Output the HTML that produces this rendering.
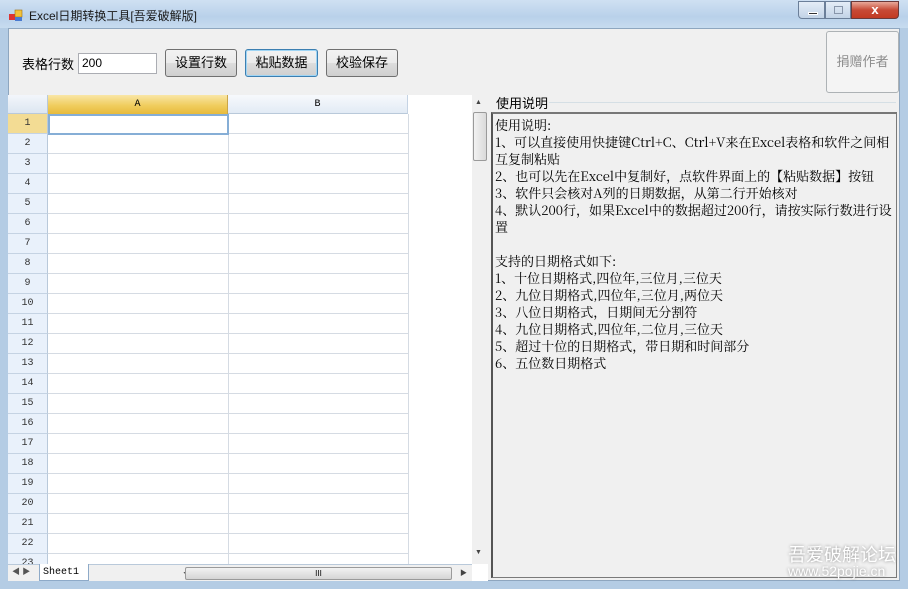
<!DOCTYPE html>
<html><head><meta charset="utf-8"><style>
*{box-sizing:border-box;margin:0;padding:0}
body{width:908px;height:589px;overflow:hidden;background:#b4cce4;font-family:"Liberation Sans","Microsoft YaHei","Noto Sans CJK SC",sans-serif;font-size:13px;color:#000;position:relative}
.abs{position:absolute}
.title{left:0;top:0;width:908px;height:28px;background:linear-gradient(#cfe0f2,#b9d1ea 60%,#c7dbef)}
.client{left:8px;top:28px;width:892px;height:553px;background:#f0f0f0;border:1px solid #8ea6bf}
.btn{background:linear-gradient(#f2f2f2,#ebebeb 50%,#dddddd 51%,#cfcfcf);border:1px solid #707070;border-radius:3px;text-align:center;line-height:26px;font-size:13px}
.grid{left:8px;top:95px;width:480px;height:486px;background:#fff}
.rh{position:absolute;left:0;width:40px;height:20px;background:#e9f1fb;border-bottom:1px solid #c5d3e3;border-right:1px solid #b9c9da;text-align:center;font:10px "Liberation Mono",monospace;line-height:20px;color:#333}
.rowl{position:absolute;left:40px;width:360px;height:20px;border-bottom:1px solid #d5dbe3}
.ta{font-family:"Noto Serif CJK SC","SimSun",serif;font-size:13px;line-height:17px;white-space:pre;color:#000}
</style></head><body>
<div class="abs title"></div>
<svg class="abs" style="left:9px;top:9px" width="14" height="13"><rect x="0" y="5" width="6" height="6" fill="#d33" /><rect x="6" y="1" width="7" height="7" fill="#f2c23a" stroke="#a07010" stroke-width="0.6"/><rect x="6" y="8" width="7" height="4" fill="#4a7ad0"/></svg>
<div class="abs" style="left:29px;top:7px;font-size:12px;color:#1a1a1a">Excel日期转换工具[吾爱破解版]</div>
<div class="abs" style="left:798px;top:1px;width:27px;height:18px;border:1px solid #6b7f99;border-radius:0 0 0 4px;background:linear-gradient(#e4edf7,#c2d3e6)"><div class="abs" style="left:9px;top:10px;width:10px;height:3px;background:#333;border:1px solid #fff"></div></div>
<div class="abs" style="left:825px;top:1px;width:26px;height:18px;border:1px solid #6b7f99;background:linear-gradient(#e4edf7,#c2d3e6)"><div class="abs" style="left:8px;top:4px;width:9px;height:8px;border:1px solid #8896aa"></div></div>
<div class="abs" style="left:851px;top:1px;width:48px;height:18px;border:1px solid #6b3a3a;border-radius:0 0 4px 0;background:linear-gradient(#e9a99a,#c74a36 50%,#c23a22);color:#fff;text-align:center;font-weight:bold;font-size:13px;line-height:16px">x</div>
<div class="abs client"></div>
<div class="abs" style="left:22px;top:54px">表格行数</div>
<div class="abs" style="left:78px;top:53px;width:79px;height:21px;background:#fff;border:1px solid #abadb3;font-size:12px;padding:2px 3px">200</div>
<div class="abs btn" style="left:165px;top:49px;width:72px;height:28px">设置行数</div>
<div class="abs btn" style="left:245px;top:49px;width:73px;height:28px;border-color:#3c7fb1;box-shadow:inset 0 0 0 1px #9fd5f5">粘贴数据</div>
<div class="abs btn" style="left:326px;top:49px;width:72px;height:28px">校验保存</div>
<div class="abs" style="left:826px;top:31px;width:73px;height:62px;border:1px solid #adb2b5;border-radius:3px;background:#f4f4f4;color:#8d8d8d;text-align:center;line-height:60px">捐赠作者</div>
<div class="abs grid">
<div class="abs" style="left:0;top:0;width:40px;height:19px;background:linear-gradient(#f3f6fb,#dce6f1);border-right:1px solid #b9c9da;border-bottom:1px solid #b9c9da"></div>
<div class="abs" style="left:40px;top:0;width:180px;height:19px;background:linear-gradient(#f9e6a6,#f0cd5e 55%,#e8bb3c);border-right:1px solid #c9a54a;text-align:center;font:10px 'Liberation Mono',monospace;line-height:19px">A</div>
<div class="abs" style="left:220px;top:0;width:180px;height:19px;background:linear-gradient(#f7f9fc,#e2ebf5);border-right:1px solid #c5d3e3;border-bottom:1px solid #b9c9da;text-align:center;font:10px 'Liberation Mono',monospace;line-height:19px">B</div>
<div class="abs" style="left:220px;top:19px;width:1px;height:450px;background:#d5dbe3"></div>
<div class="abs" style="left:400px;top:19px;width:1px;height:450px;background:#d5dbe3"></div>
<div id="rows"></div>
<div class="abs" style="left:40px;top:19px;width:181px;height:21px;border:2px solid #86aed6"></div>
<div class="abs" style="left:464px;top:0;width:16px;height:469px;background:#f0f0f0"><div class="abs" style="left:3px;top:4px;font-size:7px;color:#444">▲</div><div class="abs" style="left:1px;top:17px;width:14px;height:49px;border:1px solid #9a9a9a;border-radius:2px;background:linear-gradient(90deg,#f2f2f2,#dadada)"></div><div class="abs" style="left:3px;top:454px;font-size:7px;color:#444">▼</div></div>
<div class="abs" style="left:0;top:469px;width:464px;height:17px;background:#f0f0f0;border-top:1px solid #b9c9da">
<div class="abs" style="left:4px;top:1px;font-size:8px;color:#555">◀ ▶</div>
<div class="abs" style="left:31px;top:-1px;width:50px;height:17px;background:#fff;border:1px solid #8eaac8;border-top:none;font:10px 'Liberation Mono',monospace;padding:3px 3px">Sheet1</div>
<div class="abs" style="left:175px;top:3px;font-size:7px;color:#444">◀</div>
<div class="abs" style="left:177px;top:2px;width:267px;height:13px;border:1px solid #9a9a9a;border-radius:2px;background:linear-gradient(#f2f2f2,#d5d5d5);text-align:center;font-size:8px;line-height:11px">III</div>
<div class="abs" style="left:452px;top:3px;font-size:7px;color:#444">▶</div>
</div>
</div>
<div class="abs" style="left:496px;top:93px;font-size:13px">使用说明</div>
<div class="abs" style="left:549px;top:102px;width:347px;height:1px;background:#d5dfe5"></div>
<div class="abs ta" style="left:491px;top:112px;width:406px;height:466px;border:1px solid #7a7a7a;border-left:2px solid #555;border-top:2px solid #777;background:#f0f0f0;padding:2px 2px">使用说明:
1、可以直接使用快捷键Ctrl+C、Ctrl+V来在Excel表格和软件之间相
互复制粘贴
2、也可以先在Excel中复制好，点软件界面上的【粘贴数据】按钮
3、软件只会核对A列的日期数据，从第二行开始核对
4、默认200行，如果Excel中的数据超过200行，请按实际行数进行设
置

支持的日期格式如下:
1、十位日期格式,四位年,三位月,三位天
2、九位日期格式,四位年,三位月,两位天
3、八位日期格式，日期间无分割符
4、九位日期格式,四位年,二位月,三位天
5、超过十位的日期格式，带日期和时间部分
6、五位数日期格式</div>
<div class="abs" style="left:788px;top:541px;font-size:18px;color:#fff;text-shadow:0 0 3px #888">吾爱破解论坛</div>
<div class="abs" style="left:788px;top:563px;font-size:14px;color:#fff;text-shadow:0 0 3px #888">www.52pojie.cn</div>
<script>
var h='';for(var i=1;i<=23;i++){var t=19+(i-1)*20;h+='<div class="rh" style="top:'+t+'px;'+(i==1?'background:#f3dc94;':'')+'">'+i+'</div><div class="rowl" style="top:'+t+'px"></div>';}
document.getElementById('rows').innerHTML=h;
</script>
</body></html>
